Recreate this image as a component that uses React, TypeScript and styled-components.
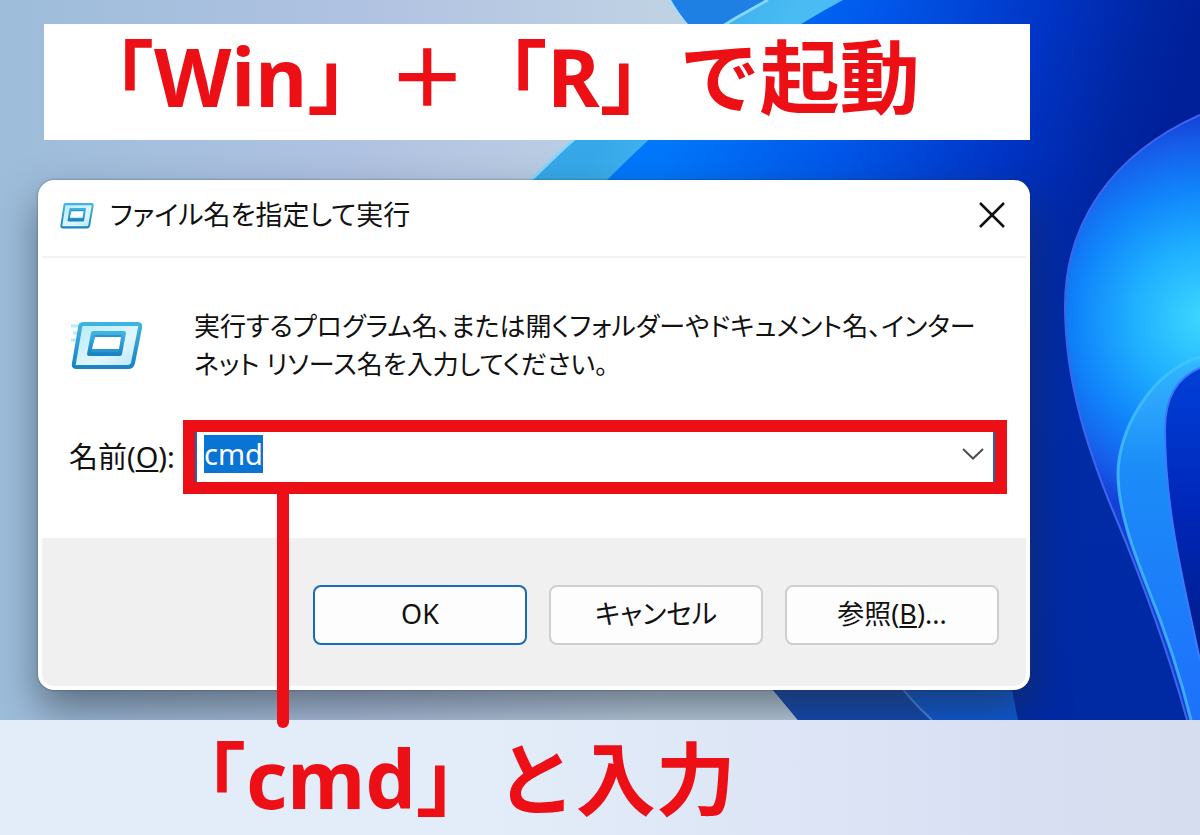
import React, { useEffect, useRef } from "react";
import styled, { createGlobalStyle } from "styled-components";

const RED = "#ec0f16";

const GlobalStyle = createGlobalStyle`
  * { box-sizing: border-box; }
  body {
    margin: 0;
    background: #dfe8f6;
    color: #111;
    font-family: "Noto Sans", "Noto Sans CJK JP", sans-serif;
  }
`;

const Page = styled.main`
  display: flex;
  flex-direction: column;
  min-height: 100vh;
`;

const Desktop = styled.section`
  position: relative;
  display: flex;
  flex-direction: column;
  gap: 40px;
  padding: 24px 170px 30px 38px;
`;

const WallpaperSvg = styled.svg`
  position: absolute;
  inset: 0;
  width: 100%;
  height: 100%;
  z-index: -1;
`;

const Heading = styled.h1`
  margin: 0;
  font-size: 80px;
  line-height: 104px;
  font-weight: 700;
  color: ${RED};
  white-space: nowrap;
`;

const Banner = styled.header`
  margin-left: 6px;
  padding: 0 30px 12px;
  background: #fff;
`;

const Caption = styled.footer`
  position: relative;
  z-index: 1;
  flex: 1;
  padding: 6px 166px 0;
  background: linear-gradient(90deg, #e3edf9 40%, #d8dff3 85%, #d6ddee);
`;

const Dialog = styled.section`
  display: flex;
  flex-direction: column;
  padding: 0 4px 4px;
  background: #fff;
  border-radius: 16px;
  box-shadow: 0 0 2px rgba(30, 50, 80, 0.7), 0 20px 40px rgba(35, 45, 55, 0.55);
`;

const TitleBar = styled.div`
  display: flex;
  align-items: center;
  gap: 16px;
  height: 78px;
  padding: 0 14px 6px 18px;
  border-bottom: 2px solid #f2f2f2;
`;

const Title = styled.h2`
  flex: 1;
  margin: 0;
  font-size: 27px;
  line-height: 40px;
  font-weight: 400;
  font-feature-settings: "palt";
`;

const IconButton = styled.button`
  display: flex;
  align-items: center;
  justify-content: center;
  width: 40px;
  height: 40px;
  padding: 0;
  border: 0;
  background: transparent;
`;

const Content = styled.div`
  padding: 49px 19px 44px 27px;
`;

const Intro = styled.div`
  display: flex;
  align-items: center;
  gap: 51px;
  padding-left: 2px;
`;

const Description = styled.p`
  margin: 0;
  font-size: 26px;
  line-height: 38px;
  font-feature-settings: "palt";
  white-space: nowrap;
`;

const Field = styled.div`
  display: flex;
  align-items: center;
  gap: 6px;
  margin-top: 37px;
`;

const Label = styled.label`
  width: 108px;
  font-size: 29px;
  line-height: 38px;
  white-space: nowrap;
`;

const Highlight = styled.div`
  position: relative;
  flex: 1;
  border: 12px solid ${RED};
`;

const Callout = styled.span`
  position: absolute;
  z-index: 2;
  top: 100%;
  left: 82px;
  width: 12px;
  height: 246px;
  border-radius: 0 0 6px 6px;
  background: ${RED};
`;

const Combo = styled.div`
  display: flex;
  align-items: center;
  height: 50px;
  padding: 0 0 6px 7px;
  border: solid #1668b5;
  border-width: 0 2px;
  background: #fff;
`;

const TextInput = styled.input`
  flex: 1;
  min-width: 0;
  height: 38px;
  padding: 0;
  border: 0;
  outline: 0;
  background: transparent;
  color: #111;
  font: 29px/38px "Noto Sans", sans-serif;

  &::selection {
    background: #0a74d4;
    color: #fff;
  }
`;

const Actions = styled.div`
  display: flex;
  justify-content: flex-end;
  gap: 22px;
  padding: 47px 27px 41px;
  background: #f0f0f0;
  border-radius: 0 0 12px 12px;
`;

const PushButton = styled.button<{ $primary?: boolean }>`
  width: 214px;
  height: 60px;
  padding: 0 0 2px;
  border: 2px solid ${(p) => (p.$primary ? "#1a6bb8" : "#cfcfcf")};
  border-radius: 8px;
  background: #fdfdfd;
  color: #111;
  font: 27px/38px "Noto Sans", "Noto Sans CJK JP", sans-serif;
  font-feature-settings: "palt";
`;

function Wallpaper() {
  return (
    <WallpaperSvg viewBox="0 0 1200 720" preserveAspectRatio="none" aria-hidden="true">
      <defs>
        <linearGradient id="sky" x1="0" y1="0" x2="1" y2="0">
          <stop offset="0" stopColor="#9dbddb" />
          <stop offset=".3" stopColor="#b0c2e1" />
          <stop offset=".55" stopColor="#bfd2e4" />
        </linearGradient>
        <linearGradient id="deep" gradientUnits="userSpaceOnUse" x1="690" y1="60" x2="1140" y2="200">
          <stop offset="0" stopColor="#0077fb" />
          <stop offset=".35" stopColor="#0058ea" />
          <stop offset=".7" stopColor="#0034c4" />
          <stop offset=".9" stopColor="#0026a2" />
          <stop offset="1" stopColor="#00209a" />
        </linearGradient>
        <linearGradient id="band" gradientUnits="userSpaceOnUse" x1="640" y1="80" x2="720" y2="130">
          <stop offset="0" stopColor="#36a8ea" />
          <stop offset="1" stopColor="#4abcf3" />
        </linearGradient>
        <linearGradient id="navy" x1="0" y1="0" x2="0" y2="1">
          <stop offset="0" stopColor="#002ca6" stopOpacity="0" />
          <stop offset=".35" stopColor="#002ca6" />
          <stop offset="1" stopColor="#0029a4" />
        </linearGradient>
        <radialGradient id="petal" gradientUnits="userSpaceOnUse" cx="1205" cy="318" r="205">
          <stop offset="0" stopColor="#3ed8ff" />
          <stop offset=".35" stopColor="#1fb0ff" />
          <stop offset=".62" stopColor="#1086fb" />
          <stop offset=".85" stopColor="#165eea" />
          <stop offset="1" stopColor="#1440d6" />
        </radialGradient>
        <linearGradient id="fold" x1="0" y1="0" x2="0" y2="1">
          <stop offset="0" stopColor="#34b4ff" />
          <stop offset=".3" stopColor="#1b8cf8" />
          <stop offset="1" stopColor="#1e70fb" />
        </linearGradient>
        <linearGradient id="core" x1="0" y1="0" x2="0" y2="1">
          <stop offset="0" stopColor="#0040d8" />
          <stop offset=".5" stopColor="#0026b8" />
          <stop offset="1" stopColor="#001c86" />
        </linearGradient>
      </defs>
      <rect width="1200" height="720" fill="url(#sky)" />
      <path d="M670 0 Q678 14 690 28 L560 152 L500 210 V400 L775 690 L798 720 H1200 V0Z" fill="url(#deep)" />
      <path d="M670 0 Q677 13 690 28 L724 26 L768 0Z" fill="#1d80e2" />
      <path d="M670 0 Q677 13 690 28" fill="none" stroke="#a7dcff" strokeWidth="2" />
      <path d="M768 0 H843 Q720 66 607 180 H531 Q650 62 768 0Z" fill="url(#band)" />
      <path d="M768 0 Q650 62 531 180" fill="none" stroke="#86d7fb" strokeWidth="3" />
      <rect x="1000" y="190" width="200" height="530" fill="url(#navy)" />
      <path d="M773 690 L798 720 H1018 L1010 680 H765Z" fill="#0c58d8" />
      <path d="M773 690 L798 720 H932 Q910 700 896 680 H765Z" fill="#1048b4" />
      <path d="M896 680 Q910 700 932 720" fill="none" stroke="#4a8cf0" strokeWidth="2" />
      <path d="M1200 115 C1110 155 1065 225 1065 306 C1065 385 1090 455 1113 511 C1140 575 1165 640 1187 720 H1200Z" fill="url(#petal)" />
      <path d="M1200 115 C1110 155 1065 225 1065 306 C1065 385 1090 455 1113 511 C1140 575 1165 640 1187 720" fill="none" stroke="#3c66ee" strokeWidth="2" />
      <path d="M1200 362 C1150 375 1118 430 1118 474 C1118 510 1133 550 1147 586 C1165 630 1180 675 1191 720 H1200Z" fill="url(#fold)" />
      <path d="M1200 357 C1150 373 1118 430 1118 474 C1118 510 1133 550 1147 586 C1165 630 1180 675 1191 720" fill="none" stroke="#48c4ff" strokeWidth="3" strokeOpacity=".75" />
      <path d="M1200 368 C1176 378 1165 400 1165 429 C1165 510 1183 580 1200 660Z" fill="url(#core)" />
      <path d="M1200 368 C1176 378 1165 400 1165 429 C1165 510 1183 580 1200 660" fill="none" stroke="#3a7bfb" strokeWidth="2" />
    </WallpaperSvg>
  );
}

function RunIcon({ width, height, streaks }: { width: number; height: number; streaks?: boolean }) {
  return (
    <svg width={width} height={height} viewBox="0 0 72 50" preserveAspectRatio="none" aria-hidden="true">
      <defs>
        <linearGradient id="runEdge" x1="0" y1="0" x2="0" y2="1">
          <stop offset="0" stopColor="#3fb4e0" />
          <stop offset="1" stopColor="#1a83c4" />
        </linearGradient>
        <linearGradient id="runFace" x1="0" y1="0" x2="1" y2="1">
          <stop offset="0" stopColor="#b4ebfa" />
          <stop offset=".6" stopColor="#e0f6fd" />
          <stop offset="1" stopColor="#b4e4f8" />
        </linearGradient>
      </defs>
      {streaks && <path d="M0 6H10M2 13H8M0 20H7" stroke="#b8ecf5" strokeWidth="3" />}
      <path d="M12 4H67Q70 4 69 8L62 43Q61 47 57 47H5Q2 47 3 43L9 8Q9 4 12 4Z" fill="url(#runFace)" stroke="url(#runEdge)" strokeWidth="4" />
      <path d="M22 13H53L49 34H18Z" fill="#2a94cc" stroke="url(#runEdge)" strokeWidth="4" strokeLinejoin="round" />
      <path d="M24 17H50L48 29H21Z" fill="#fff" />
    </svg>
  );
}

export default function App() {
  const inputRef = useRef<HTMLInputElement>(null);

  useEffect(() => {
    inputRef.current?.focus({ preventScroll: true });
    inputRef.current?.select();
  }, []);

  return (
    <>
      <GlobalStyle />
      <Page>
        <Desktop>
          <Wallpaper />
          <Banner>
            <Heading>「Win」{"\uFF0B"}「R」で起動</Heading>
          </Banner>
          <Dialog role="dialog" aria-labelledby="run-title">
            <TitleBar>
              <RunIcon width={34} height={27} />
              <Title id="run-title">ファイル名を指定して実行</Title>
              <IconButton type="button" aria-label="閉じる">
                <svg width="28" height="28" viewBox="0 0 28 28" fill="none" stroke="#111" strokeWidth="2.5">
                  <path d="M2 2L26 26M26 2L2 26" />
                </svg>
              </IconButton>
            </TitleBar>
            <Content>
              <Intro>
                <RunIcon width={72} height={50} streaks />
                <Description>
                  実行するプログラム名、または開くフォルダーやドキュメント名、インター
                  <br />
                  ネット リソース名を入力してください。
                </Description>
              </Intro>
              <Field>
                <Label htmlFor="run-name">
                  名前(<u>O</u>):
                </Label>
                <Highlight>
                  <Combo>
                    <TextInput id="run-name" ref={inputRef} type="text" defaultValue="cmd" />
                    <IconButton type="button" aria-label="一覧を開く">
                      <svg width="22" height="12" viewBox="0 0 22 12" fill="none" stroke="#505050" strokeWidth="2">
                        <path d="M1 1L11 10.500L21 1" />
                      </svg>
                    </IconButton>
                  </Combo>
                  <Callout />
                </Highlight>
              </Field>
            </Content>
            <Actions>
              <PushButton type="button" $primary>OK</PushButton>
              <PushButton type="button">キャンセル</PushButton>
              <PushButton type="button">
                参照(<u>B</u>)...
              </PushButton>
            </Actions>
          </Dialog>
        </Desktop>
        <Caption>
          <Heading as="p">「cmd」と入力</Heading>
        </Caption>
      </Page>
    </>
  );
}
